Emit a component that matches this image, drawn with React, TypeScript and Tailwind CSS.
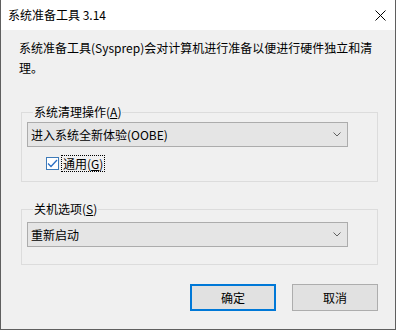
function Combo({ value }: { value: string }) {
  return (
    <div className="w-[321px] h-[25px] bg-[#e5e5e5] border border-[#acacac] flex items-center justify-between pl-[3px] pr-[6px]">
      <span className="leading-[16px]">{value}</span>
      <svg width="8" height="5" viewBox="0 0 8 5" className="text-[#606060]">
        <path d="M0.5 0.5 L4 4 L7.5 0.5" fill="none" stroke="currentColor" strokeWidth="1" />
      </svg>
    </div>
  )
}

function Group({ label, hotkey, children, className }: { label: string; hotkey: string; children: React.ReactNode; className?: string }) {
  return (
    <fieldset className={`ml-[20px] w-[357px] border border-[#dcdcdc] ${className ?? ''}`}>
      <legend className="ml-[6px] px-[1px] leading-[16px]">
        {label}(<span className="underline">{hotkey}</span>)
      </legend>
      {children}
    </fieldset>
  )
}

export default function App() {
  return (
    <div className="w-[396px] h-[330px] bg-[#f0f0f0] border-x border-b border-[#5f5f5f] flex flex-col text-[12px] text-black font-['Noto_Sans_CJK_SC',sans-serif] overflow-hidden">

      {/* Title bar */}
      <div className="h-[30px] bg-white flex items-center justify-between pl-[7px] pr-[9px] shrink-0">
        <span className="leading-[16px]">系统准备工具 3.14</span>
        <svg width="11" height="11" viewBox="0 0 11 11">
          <path d="M0.5 0.5 L10.5 10.5 M10.5 0.5 L0.5 10.5" fill="none" stroke="#000" strokeWidth="1" />
        </svg>
      </div>

      {/* Description */}
      <p className="pl-[18px] pt-[8px] w-[378px] leading-[20px]">
        系统准备工具(Sysprep)会对计算机进行准备以便进行硬件独立和清理。
      </p>

      {/* Cleanup action */}
      <Group label="系统清理操作" hotkey="A" className="mt-[26px] pl-[5px] pb-[9px]">
        <div className="mt-[2px]">
          <Combo value="进入系统全新体验(OOBE)" />
        </div>
        <div className="mt-[8px] pl-[19px] h-[17px] flex items-center gap-[2px]">
          <span className="w-[13px] h-[13px] border border-[#3d7ab8] bg-white flex items-center justify-center">
            <svg width="11" height="9" viewBox="0 0 11 9">
              <path d="M1 4.5 L4 7.5 L10 1" fill="none" stroke="#2b6fc4" strokeWidth="1.3" />
            </svg>
          </span>
          <span className="h-[17px] border border-dotted border-black px-[1px] leading-[15px]">
            通用(<span className="underline">G</span>)
          </span>
        </div>
      </Group>

      {/* Shutdown options */}
      <Group label="关机选项" hotkey="S" className="mt-[19px] pl-[5px] pb-[17px]">
        <div className="mt-[5px]">
          <Combo value="重新启动" />
        </div>
      </Group>

      {/* Buttons */}
      <div className="mt-[19px] pr-[17px] flex justify-end gap-[16px]">
        <button className="w-[86px] h-[27px] bg-[#e1e1e1] border-2 border-[#0078d7] leading-[16px]">确定</button>
        <button className="w-[86px] h-[27px] bg-[#e1e1e1] border border-[#adadad] leading-[16px]">取消</button>
      </div>
    </div>
  )
}
